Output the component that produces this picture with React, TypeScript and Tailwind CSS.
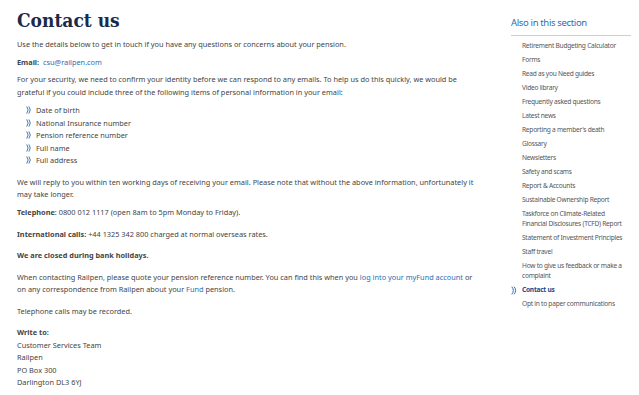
import React from "react";

const Chev = ({ className = "" }: { className?: string }) => (
  <svg viewBox="0 0 10 12" className={className} fill="none" stroke="#2a6eb3" strokeWidth="1.4" strokeLinecap="round">
    <path d="M1.5 1 Q5.5 6 1.5 11" />
    <path d="M4.8 1 Q8.8 6 4.8 11" />
  </svg>
);

const sideItems: (string | { t: string; active: boolean })[] = [
  "Retirement Budgeting Calculator",
  "Forms",
  "Read as you Need guides",
  "Video library",
  "Frequently asked questions",
  "Latest news",
  "Reporting a member's death",
  "Glossary",
  "Newsletters",
  "Safety and scams",
  "Report & Accounts",
  "Sustainable Ownership Report",
  "Taskforce on Climate-Related Financial Disclosures (TCFD) Report",
  "Statement of Investment Principles",
  "Staff travel",
  "How to give us feedback or make a complaint",
  { t: "Contact us", active: true },
  "Opt in to paper communications",
];

export default function App() {
  return (
    <div
      className="w-[639px] h-[395px] bg-white overflow-hidden flex text-[#444] text-[7.35px] leading-[12.5px]"
      style={{ fontFamily: '"Noto Sans", sans-serif' }}
    >
      <main className="w-[462px] ml-[17px] pt-[6px]">
        <h1
          className="text-[19px] leading-[28px] font-bold text-[#1b2a4a] mb-[4px]"
          style={{ fontFamily: '"DejaVu Serif Condensed", "DejaVu Serif", serif' }}
        >
          Contact us
        </h1>
        <p className="mb-[5px]">Use the details below to get in touch if you have any questions or concerns about your pension.</p>
        <p className="mb-[5px]">
          <b className="font-bold">Email:</b>&nbsp; <span className="text-[#2a6eb3]">csu@railpen.com</span>
        </p>
        <p className="mb-[6px]">
          For your security, we need to confirm your identity before we can respond to any emails. To help us do this quickly, we would be
          grateful if you could include three of the following items of personal information in your email:
        </p>
        <ul className="ml-[9px] mb-[9px]">
          {["Date of birth", "National Insurance number", "Pension reference number", "Full name", "Full address"].map((t) => (
            <li key={t} className="flex items-center gap-[3.5px] h-[12.5px]">
              <Chev className="w-[6.5px] h-[8px]" />
              <span>{t}</span>
            </li>
          ))}
        </ul>
        <p className="mb-[5.5px]">
          We will reply to you within ten working days of receiving your email. Please note that without the above information, unfortunately it
          may take longer.
        </p>
        <p className="mb-[9px]">
          <b className="font-bold">Telephone</b>: 0800 012 1117 (open 8am to 5pm Monday to Friday).
        </p>
        <p className="mb-[9px]">
          <b className="font-bold">International calls:</b> +44 1325 342 800 charged at normal overseas rates.
        </p>
        <p className="mb-[9px] font-bold">We are closed during bank holidays.</p>
        <p className="mb-[9px]">
          When contacting Railpen, please quote your pension reference number. You can find this when you{" "}
          <a className="text-[#2a6eb3]">log into your myFund account</a> or on any correspondence from Railpen about your{" "}
          <a className="text-[#2a6eb3]">Fund</a> pension.
        </p>
        <p className="mb-[9px]">Telephone calls may be recorded.</p>
        <p>
          <b className="font-bold">Write to:</b>
          <br />
          Customer Services Team
          <br />
          Railpen
          <br />
          PO Box 300
          <br />
          Darlington DL3 6YJ
        </p>
      </main>
      <aside className="ml-[32px] w-[120px] pt-[16px]">
        <h2 className="text-[9.5px] leading-[14px] text-[#2a6eb3] tracking-[-0.35px] pb-[5px] border-b border-[#cfcfcf]">
          Also in this section
        </h2>
        <ul className="mt-[3px] text-[6.6px] leading-[10px] tracking-[-0.25px] text-[#555]">
          {sideItems.map((it) => {
            const active = typeof it !== "string";
            const t = typeof it === "string" ? it : it.t;
            return (
              <li key={t} className="relative pl-[11px] py-[2px]">
                {active && <Chev className="absolute left-0 top-[2.5px] w-[7px] h-[9px]" />}
                <span className={active ? "text-[#1b4a8a] font-bold" : ""}>{t}</span>
              </li>
            );
          })}
        </ul>
      </aside>
    </div>
  );
}
